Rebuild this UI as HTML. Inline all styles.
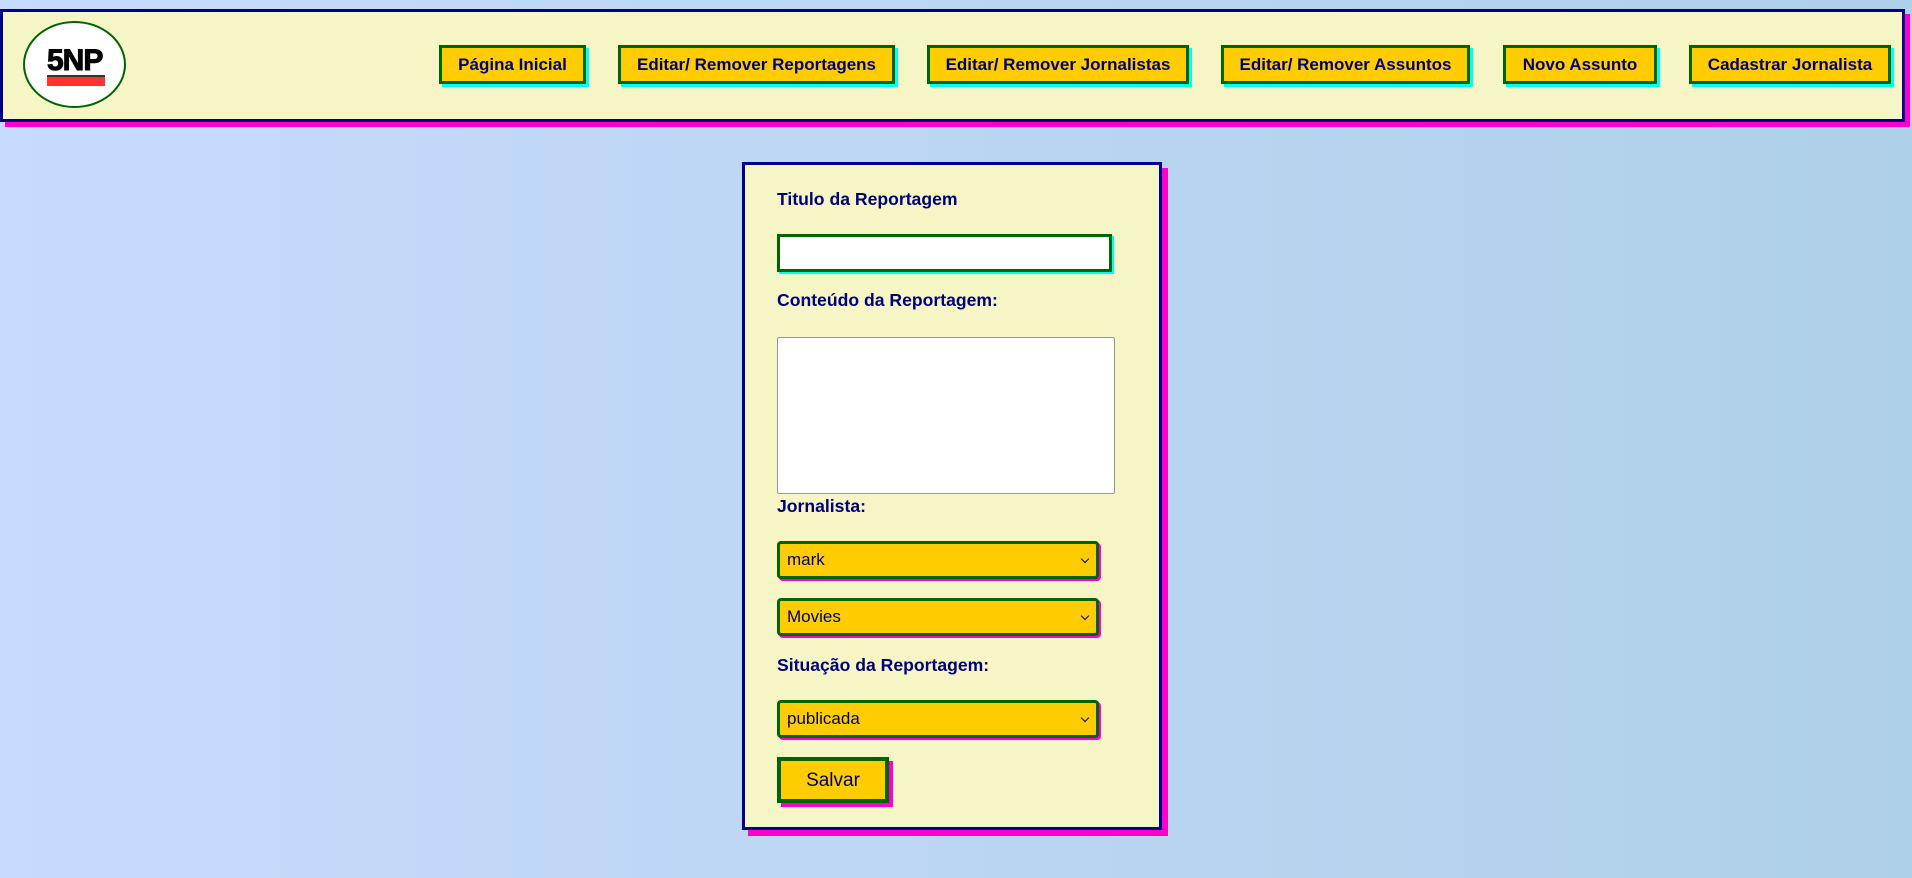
<!DOCTYPE html>
<html><head><meta charset="utf-8"><style>
*{box-sizing:border-box;margin:0;padding:0}
body{width:1912px;height:878px;overflow:hidden;background:linear-gradient(90deg,#c7dbfc,#afd0e9);font-family:"Liberation Sans",Arial,sans-serif;position:relative;color:#00006e}
.hdr{position:absolute;left:0;top:9px;width:1905px;height:113px;background:#f6f5c6;border:3px solid #00008b;box-shadow:5px 5px 0 #ff00cc}
.logo{position:absolute;left:23px;top:21px;width:103px;height:87px;border:2px solid #006400;border-radius:50%;background:#fff}
.logo .t{position:absolute;left:22px;top:25px;font-weight:bold;font-size:30px;letter-spacing:-1px;color:#000;line-height:26px;-webkit-text-stroke:1px #000}
.logo .bar{position:absolute;left:22px;top:52px;width:58px;height:11px;background:#f33;border-top:2px solid #333}
.btn{position:absolute;top:45px;height:39px;background:#ffcc00;border:3px solid #006400;box-shadow:3px 3px 0 #00ffee;font-weight:bold;font-size:17px;color:#00007a;text-align:center;line-height:34px;white-space:nowrap}
.card{position:absolute;left:742px;top:162px;width:420px;height:668px;background:#f6f5c6;border:3px solid #00008b;box-shadow:6px 6px 0 #ff00cc}
.lbl{position:absolute;left:777px;font-weight:bold;font-size:17.6px;color:#00007a}
.inp{position:absolute;left:777px;top:234px;width:335px;height:38px;background:#fff;border:3px solid #006400;box-shadow:2px 2px 0 #00ffee}
.ta{position:absolute;left:777px;top:337px;width:338px;height:157px;background:#fff;border:1px solid #999;border-radius:2px}
.sel{position:absolute;left:777px;width:322px;height:38px;background:#ffcc00;border:3px solid #006400;border-radius:4px;box-shadow:2px 2px 0 #ff00cc;font-size:17px;color:#00006e;line-height:32px;padding-left:7px}
.sel:after{content:"";position:absolute;right:8px;top:12px;width:5px;height:5px;border-right:1.5px solid #00006e;border-bottom:1.5px solid #00006e;transform:rotate(45deg)}
.save{position:absolute;left:777px;top:757px;width:112px;height:46px;background:#ffcc00;border:4px solid #006400;box-shadow:4px 4px 0 #ff00cc;font-size:19px;text-align:center;line-height:40px;color:#00006e}
</style></head><body>
<div class="hdr"></div>
<div class="logo"><div class="t">5NP</div><div class="bar"></div></div>
<div class="btn" style="left:439px;width:147px">Página Inicial</div>
<div class="btn" style="left:618px;width:277px">Editar/ Remover Reportagens</div>
<div class="btn" style="left:927px;width:262px">Editar/ Remover Jornalistas</div>
<div class="btn" style="left:1221px;width:249px">Editar/ Remover Assuntos</div>
<div class="btn" style="left:1503px;width:154px">Novo Assunto</div>
<div class="btn" style="left:1689px;width:202px">Cadastrar Jornalista</div>
<div class="card"></div>
<div class="lbl" style="top:189px">Titulo da Reportagem</div>
<div class="inp"></div>
<div class="lbl" style="top:290px">Conteúdo da Reportagem:</div>
<div class="ta"></div>
<div class="lbl" style="top:496px">Jornalista:</div>
<div class="sel" style="top:541px">mark</div>
<div class="sel" style="top:598px">Movies</div>
<div class="lbl" style="top:655px">Situação da Reportagem:</div>
<div class="sel" style="top:700px">publicada</div>
<div class="save">Salvar</div>
</body></html>
